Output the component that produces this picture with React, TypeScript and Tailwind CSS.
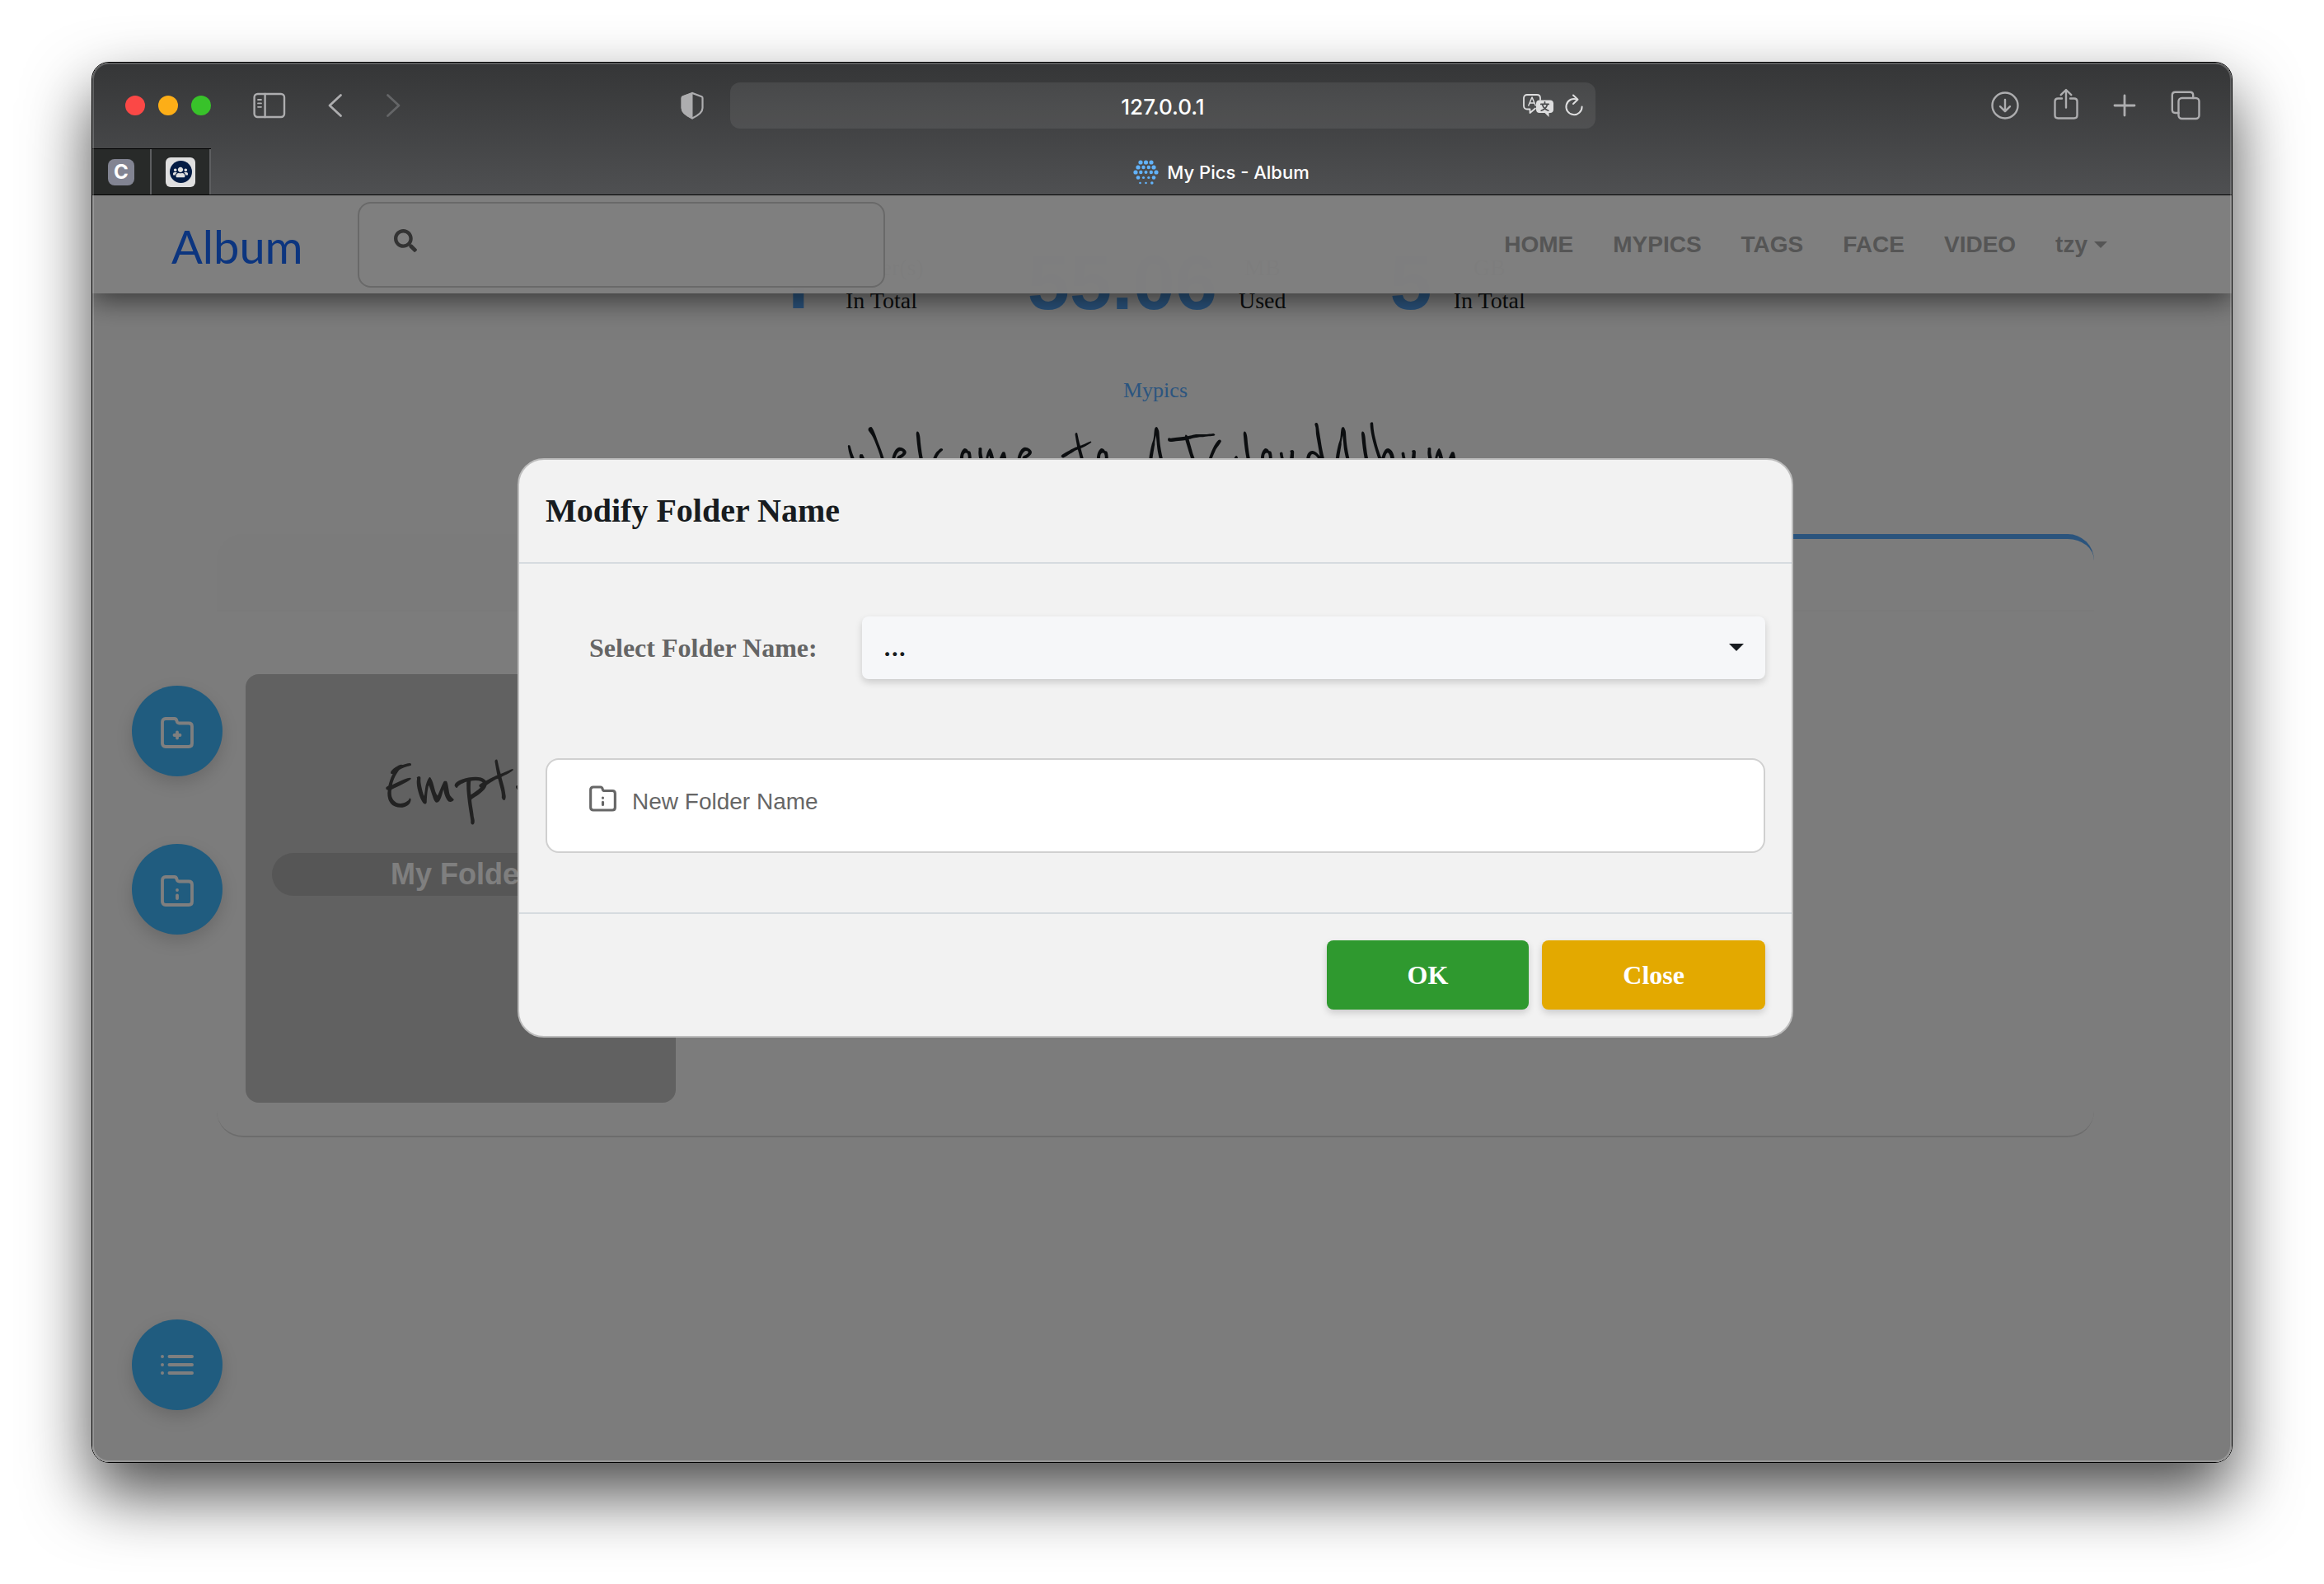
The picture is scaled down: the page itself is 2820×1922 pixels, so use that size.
import React from "react";
import { FaSearch, FaUsers } from "react-icons/fa";

const iconStroke = {
  fill: "none",
  stroke: "currentColor",
  strokeLinecap: "round" as const,
  strokeLinejoin: "round" as const,
};

function SidebarIcon() {
  return (
    <svg viewBox="0 0 40 32" className="h-8 w-10" {...iconStroke} strokeWidth="2.4">
      <rect x="1.6" y="2" width="36.4" height="28" rx="4" />
      <path d="M14.6 2v28" />
      <path d="M6 9h4M6 13.400h4M6 17.800h4" strokeWidth="1.8" />
    </svg>
  );
}

function Chevron({ flip = false }: { flip?: boolean }) {
  return (
    <svg viewBox="0 0 20 32" className="h-8 w-5" {...iconStroke} strokeWidth="2.8">
      <path d={flip ? "M3.500 3.500 17 16 3.500 28.500" : "M16.500 3.500 3 16l13.500 12.500"} />
    </svg>
  );
}

function ShieldIcon() {
  return (
    <svg viewBox="0 0 28 34" className="h-[34px] w-7">
      <path
        d="M14 2 2.500 6.300Q1.500 6.700 1.500 8v12c0 4 4 8.500 12.500 12.500C22.500 28.500 26.500 24 26.500 20V8q0-1.300-1-1.700Z"
        fill="none"
        stroke="currentColor"
        strokeWidth="2.200"
      />
      <path d="M14.500 1 2 5.700Q.8 6.200.8 8v12c0 5 5 9.500 13.700 13.500Z" fill="currentColor" />
    </svg>
  );
}

function TranslateIcon() {
  return (
    <svg viewBox="0 0 38 28" className="h-7 w-[38px]" {...iconStroke} strokeWidth="1.800">
      <path d="M15 17.500 8.500 23v-4.500H5c-2.400 0-4-1.600-4-4V5c0-2.400 1.600-4 4-4h12c2.400 0 4 1.600 4 4v2" />
      <path d="M6.800 14 11 4l4.200 10M8.200 11h5.600" strokeWidth="1.500" />
      <path
        d="M20 7.500h13c2.400 0 4 1.600 4 4V19c0 2.400-1.600 4-4 4h-1.500v5l-5-5H20c-2.400 0-4-1.600-4-4v-7.500c0-2.400 1.600-4 4-4Z"
        fill="currentColor"
        stroke="none"
      />
      <path d="M26.500 9.800v2M21.800 12.400h9.400M29.600 12.800c-1 3.500-3.600 6.200-7.400 7.400M23.500 12.800c1 3.500 3.500 6.200 7.300 7.400" stroke="#4a4b4d" strokeWidth="1.700" />
    </svg>
  );
}

function ReloadIcon() {
  return (
    <svg viewBox="0 0 24 28" className="h-7 w-6" {...iconStroke} strokeWidth="2">
      <path d="M15.500 6.600A9.600 9.600 0 1 0 21.600 15.500" />
      <path d="M11 1.500l5.500 5.200-5.500 5.300" />
    </svg>
  );
}

function DownloadIcon() {
  return (
    <svg viewBox="0 0 34 34" className="size-[34px]" {...iconStroke} strokeWidth="2.400">
      <circle cx="17" cy="17" r="15.500" />
      <path d="M17 10v14M11 18.200l6 6 6-6" />
    </svg>
  );
}

function ShareIcon() {
  return (
    <svg viewBox="0 0 30 38" className="h-[38px] w-[30px]" {...iconStroke} strokeWidth="2.400">
      <path d="M10 12.500H5.200c-2.200 0-3.700 1.500-3.700 3.700v16.600c0 2.200 1.500 3.700 3.700 3.700h19.600c2.200 0 3.700-1.500 3.700-3.700V16.200c0-2.200-1.500-3.700-3.700-3.700H20" />
      <path d="M15 23.500V2.500M8.700 8.200 15 2l6.300 6.200" />
    </svg>
  );
}

function PlusIcon() {
  return (
    <svg viewBox="0 0 28 28" className="size-7" {...iconStroke} strokeWidth="2.800">
      <path d="M14 2v24M2 14h24" />
    </svg>
  );
}

function TabsIcon() {
  return (
    <svg viewBox="0 0 36 36" className="size-9" {...iconStroke} strokeWidth="2.400">
      <rect x="9.500" y="9" width="25" height="25" rx="4" />
      <path d="M9.500 27H5.500c-2.200 0-3.700-1.500-3.700-3.700V5.500c0-2.200 1.500-3.700 3.700-3.700h18c2.200 0 3.700 1.500 3.700 3.700V9" />
    </svg>
  );
}

const favDots: [number, number, number][] = [
  [9, 4, 2.6], [15.5, 4, 2.6], [22, 4, 2.6],
  [6, 10, 2.6], [12.5, 10, 2.2], [18.8, 10, 2.2], [25, 10, 2.6],
  [3, 16, 2.6], [9.3, 16, 2.2], [15.5, 16, 2], [21.8, 16, 2.2], [28, 16, 2.6],
  [6, 22.5, 2.3], [12.5, 22.5, 1.6], [18.8, 22.5, 1.6], [25, 22.5, 2.3],
  [8.5, 29, 1.3], [15.5, 29, 1.3], [22.8, 29, 1.8],
];

function DotsIcon() {
  return (
    <svg viewBox="0 0 31 32" className="h-8 w-[31px]">
      {favDots.map(([x, y, r]) => (
        <circle key={`${x}-${y}`} cx={x} cy={y} r={r} fill="#62b3fb" />
      ))}
    </svg>
  );
}

function FolderIcon({ mark, className }: { mark: "plus" | "info"; className: string }) {
  return (
    <svg viewBox="0 0 40 38" className={className} {...iconStroke} strokeWidth="3.800">
      <path d="M6 2h10.500c1.800 0 2.700 1.200 3.100 3 .3 1.800 1.200 2.500 2.800 2.500H34c2.600 0 4 1.400 4 4V32c0 2.600-1.400 4-4 4H6c-2.600 0-4-1.400-4-4V6c0-2.600 1.400-4 4-4Z" />
      {mark === "plus" ? <path d="M20 18.500v7M16.500 22h7" /> : <path d="M20 18v0M20 24.300v3.700" />}
    </svg>
  );
}

function ListIcon() {
  return (
    <svg viewBox="0 0 40 26" className="h-[26px] w-10" {...iconStroke} strokeWidth="4">
      <path d="M2 3v0M2 13v0M2 23v0M10.500 3H38M10.500 13H38M10.500 23H38" />
    </svg>
  );
}

function Caret({ className }: { className: string }) {
  return (
    <svg viewBox="0 0 16 8" className={className} fill="currentColor">
      <path d="M0 0h16L8 8Z" />
    </svg>
  );
}

function Toolbar() {
  return (
    <div className="flex h-[104px] items-center justify-between pl-10 pr-[38px] text-[#adadaf]">
      <div className="flex flex-1 items-center">
        <div className="flex gap-4">
          <button aria-label="Close window" className="size-6 rounded-full bg-[#fb4846]" />
          <button aria-label="Minimize window" className="size-6 rounded-full bg-[#fdae17]" />
          <button aria-label="Zoom window" className="size-6 rounded-full bg-[#38c22a]" />
        </div>
        <button aria-label="Sidebar" className="ml-[51px]"><SidebarIcon /></button>
        <button aria-label="Back" className="ml-[50px]"><Chevron /></button>
        <button aria-label="Forward" className="ml-[50px] text-[#646567]"><Chevron flip /></button>
        <button aria-label="Privacy report" className="ml-auto mr-8"><ShieldIcon /></button>
      </div>
      <div className="relative flex h-14 w-[1050px] items-center rounded-xl bg-white/8">
        <input
          aria-label="Address"
          defaultValue="127.0.0.1"
          className="w-full bg-transparent pt-[2px] text-center font-[Inter,sans-serif] text-[26px] font-medium text-white outline-none"
        />
        <div className="absolute right-[14px] flex items-center gap-3 text-[#dededf]">
          <button aria-label="Translate"><TranslateIcon /></button>
          <button aria-label="Reload"><ReloadIcon /></button>
        </div>
      </div>
      <div className="flex flex-1 items-center justify-end gap-[42px]">
        <button aria-label="Downloads"><DownloadIcon /></button>
        <button aria-label="Share" className="mb-1"><ShareIcon /></button>
        <button aria-label="New tab"><PlusIcon /></button>
        <button aria-label="Tab overview"><TabsIcon /></button>
      </div>
    </div>
  );
}

function TabBar() {
  return (
    <div className="flex h-[57px] border-b border-black">
      <div className="flex border-t border-black bg-[#282a29]">
        <button className="flex w-[72px] items-center justify-center border-r-2 border-[#5d5e60]">
          <span className="flex size-8 items-center justify-center rounded-lg bg-[#828492] font-[Inter,sans-serif] text-2xl font-bold text-white">C</span>
        </button>
        <button aria-label="Community" className="flex w-[72px] items-center justify-center border-r-2 border-[#5d5e60]">
          <span className="flex size-9 items-center justify-center rounded-md bg-[#dfdfdf]">
            <span className="flex size-[27px] items-center justify-center rounded-full bg-[#041c44]">
              <FaUsers className="size-[18px] text-[#dfdfdf]" />
            </span>
          </span>
        </button>
      </div>
      <button className="flex flex-1 items-center justify-center gap-[10px] pt-[2px] font-[Inter,sans-serif] text-[22px] font-medium text-white">
        <DotsIcon />
        My Pics - Album
      </button>
    </div>
  );
}

const links = ["HOME", "MYPICS", "TAGS", "FACE", "VIDEO"];

function Navbar() {
  return (
    <header className="absolute inset-x-0 top-0 z-10 flex h-[119px] items-center bg-white/98 pl-24 pr-[151px] shadow-[0_8px_32px_rgba(0,0,0,0.55)]">
      <a href="#" className="w-[168px] pt-1 font-[Papyrus,Lato,sans-serif] text-[56px] leading-none text-[#186aff]">Album</a>
      <div className="relative ml-[58px]">
        <FaSearch className="absolute left-11 top-[33px] size-7 text-[#666]" />
        <input aria-label="Search" className="block h-[104px] w-[640px] rounded-2xl border-2 border-[#d2d2d2] bg-white pl-24 pr-6 text-[28px] outline-none" />
      </div>
      <nav className="ml-auto flex gap-12 font-['Liberation_Sans',sans-serif] text-[28px] font-bold text-[#aaa]">
        {links.map((l) => (
          <a key={l} href="#">{l}</a>
        ))}
        <button className="flex items-center gap-2">
          tzy <Caret className="h-2 w-4" />
        </button>
      </nav>
    </header>
  );
}

function Stat({ value, top, bottom, font }: { value: string; top: string; bottom: string; font: string }) {
  return (
    <div className="flex gap-[26px]">
      <span className={`${font} text-[92px] font-bold leading-[76px] text-[#56a8fa]`}>{value}</span>
      <div className="text-center text-[28px] leading-10 text-[#181c20]">
        <p>{top}</p>
        <p>{bottom}</p>
      </div>
    </div>
  );
}

function FloatButton({ label, className = "", children }: { label: string; className?: string; children: React.ReactNode }) {
  return (
    <button
      aria-label={label}
      className={`${className} flex size-[110px] items-center justify-center rounded-full bg-[#40b8ff] text-white shadow-[0_8px_20px_rgba(0,0,0,0.15)]`}
    >
      {children}
    </button>
  );
}

function AlbumPage() {
  return (
    <div className="absolute inset-0 isolate overflow-hidden bg-[#f8f8f8]">
      <Navbar />
      <div className="pr-4 pt-[68px]">
        <div className="flex justify-center gap-[126px] pr-[14px]">
          <Stat value="1" top="Folder(s)" bottom="In Total" font="font-[Roboto,sans-serif]" />
          <Stat value="55.06" top="MB" bottom="Used" font="font-['Liberation_Sans',sans-serif]" />
          <Stat value="5" top="GB" bottom="In Total" font="font-['Liberation_Sans',sans-serif]" />
        </div>
        <p className="mt-[69px] text-center text-[26px] leading-10 text-[#56aaff]">Mypics</p>
        <h1 className="mt-5 text-center font-['Reenie_Beanie',Lato,sans-serif] text-[88px] leading-[80px] text-[#181c20]">
          Welcome to ATCloudAlbum
        </h1>
        <section className="mx-[151px] mt-[54px] rounded-[32px] border-b-2 border-b-[#d8d8d8]">
          <div className="flex h-[94px] border-b-2 border-[#f4f4f4]">
            <div className="flex-1 rounded-tl-[32px] bg-[#f6f6f6]" />
            <div className="flex-1 rounded-tr-[32px] border-t-[6px] border-[#56a8fa]" />
          </div>
          <div className="px-[35px] pb-10 pt-[76px]">
            <article className="h-[520px] w-[522px] rounded-2xl bg-[#c2c2c2] px-8 pt-24 text-center">
              <p className="font-['Reenie_Beanie',Lato,sans-serif] text-[100px] leading-[80px] text-[#444]">Empty</p>
              <p className="mt-[41px] rounded-full bg-[#acacac] font-['Liberation_Sans',sans-serif] text-4xl font-bold leading-[52px] text-white">
                My Folder
              </p>
            </article>
          </div>
        </section>
      </div>
      <div className="absolute bottom-[63px] left-12 top-[595px] flex flex-col">
        <FloatButton label="Add folder">
          <FolderIcon mark="plus" className="mt-1 h-[38px] w-10" />
        </FloatButton>
        <FloatButton label="Modify folder" className="mt-[82px]">
          <FolderIcon mark="info" className="mt-1 h-[38px] w-10" />
        </FloatButton>
        <FloatButton label="Menu" className="mt-auto">
          <ListIcon />
        </FloatButton>
      </div>
    </div>
  );
}

function Dialog() {
  return (
    <div className="absolute inset-0 flex items-start justify-center bg-black/50 pr-4 pt-[319px]">
      <form
        role="dialog"
        aria-labelledby="dialog-title"
        className="w-full max-w-[1548px] rounded-[32px] border-2 border-[#bdbdbd] bg-[#f2f2f2]"
      >
        <div className="border-b-2 border-[#d6dbdf] px-8 pb-9 pt-9">
          <h2 id="dialog-title" className="text-[40px] font-bold leading-[52px] text-[#181c20]">Modify Folder Name</h2>
        </div>
        <div className="px-8 pb-[72px] pt-16">
          <div className="flex items-center">
            <label htmlFor="folder" className="w-[384px] pl-[53px] text-[32px] font-bold text-[#656565]">
              Select Folder Name:
            </label>
            <div className="relative flex-1">
              <select
                id="folder"
                className="block h-[76px] w-full appearance-none rounded-lg bg-[#f6f7f9] px-[26px] font-[Inter,sans-serif] text-[26px] font-extrabold text-[#181c20] shadow-[0_4px_8px_rgba(0,0,0,0.16)]"
              >
                <option>...</option>
              </select>
              <Caret className="pointer-events-none absolute right-[26px] top-[33px] h-[9px] w-[18px] text-[#181c20]" />
            </div>
          </div>
          <div className="relative mt-24">
            <FolderIcon mark="info" className="absolute left-[53px] top-[33px] h-8 w-[33px] text-[#666]" />
            <input
              aria-label="New Folder Name"
              placeholder="New Folder Name"
              className="block h-[115px] w-full rounded-2xl border-2 border-[#d0d0d0] bg-white pb-[10px] pl-[103px] pr-8 font-['Liberation_Sans',sans-serif] text-[28px] outline-none placeholder:text-[#666]"
            />
          </div>
        </div>
        <div className="flex justify-end gap-4 border-t-2 border-[#d6dbdf] px-8 py-8 text-[32px] font-bold text-white">
          <button type="button" className="h-[84px] rounded-lg bg-[#2f992f] px-[98px] shadow-[0_4px_8px_rgba(0,0,0,0.16)]">OK</button>
          <button type="button" className="h-[84px] rounded-lg bg-[#e3a900] px-[98px] shadow-[0_4px_8px_rgba(0,0,0,0.16)]">Close</button>
        </div>
      </form>
    </div>
  );
}

export default function App() {
  return (
    <div className="flex min-h-screen bg-white px-[111px] pb-[147px] pt-[75px] font-['Liberation_Serif',serif]">
      <div className="flex flex-1 rounded-[21px] shadow-[0_38px_80px_rgba(0,0,0,0.7)]">
        <div className="relative flex flex-1 flex-col overflow-hidden rounded-[21px] border border-black">
          <div className="bg-linear-to-b from-[#353637] to-[#4f5052]">
            <Toolbar />
            <TabBar />
          </div>
          <main className="relative min-h-[1200px] flex-1">
            <AlbumPage />
            <Dialog />
          </main>
          <div className="pointer-events-none absolute inset-0 rounded-[20px] inset-ring-2 inset-ring-white/20" />
        </div>
      </div>
    </div>
  );
}
